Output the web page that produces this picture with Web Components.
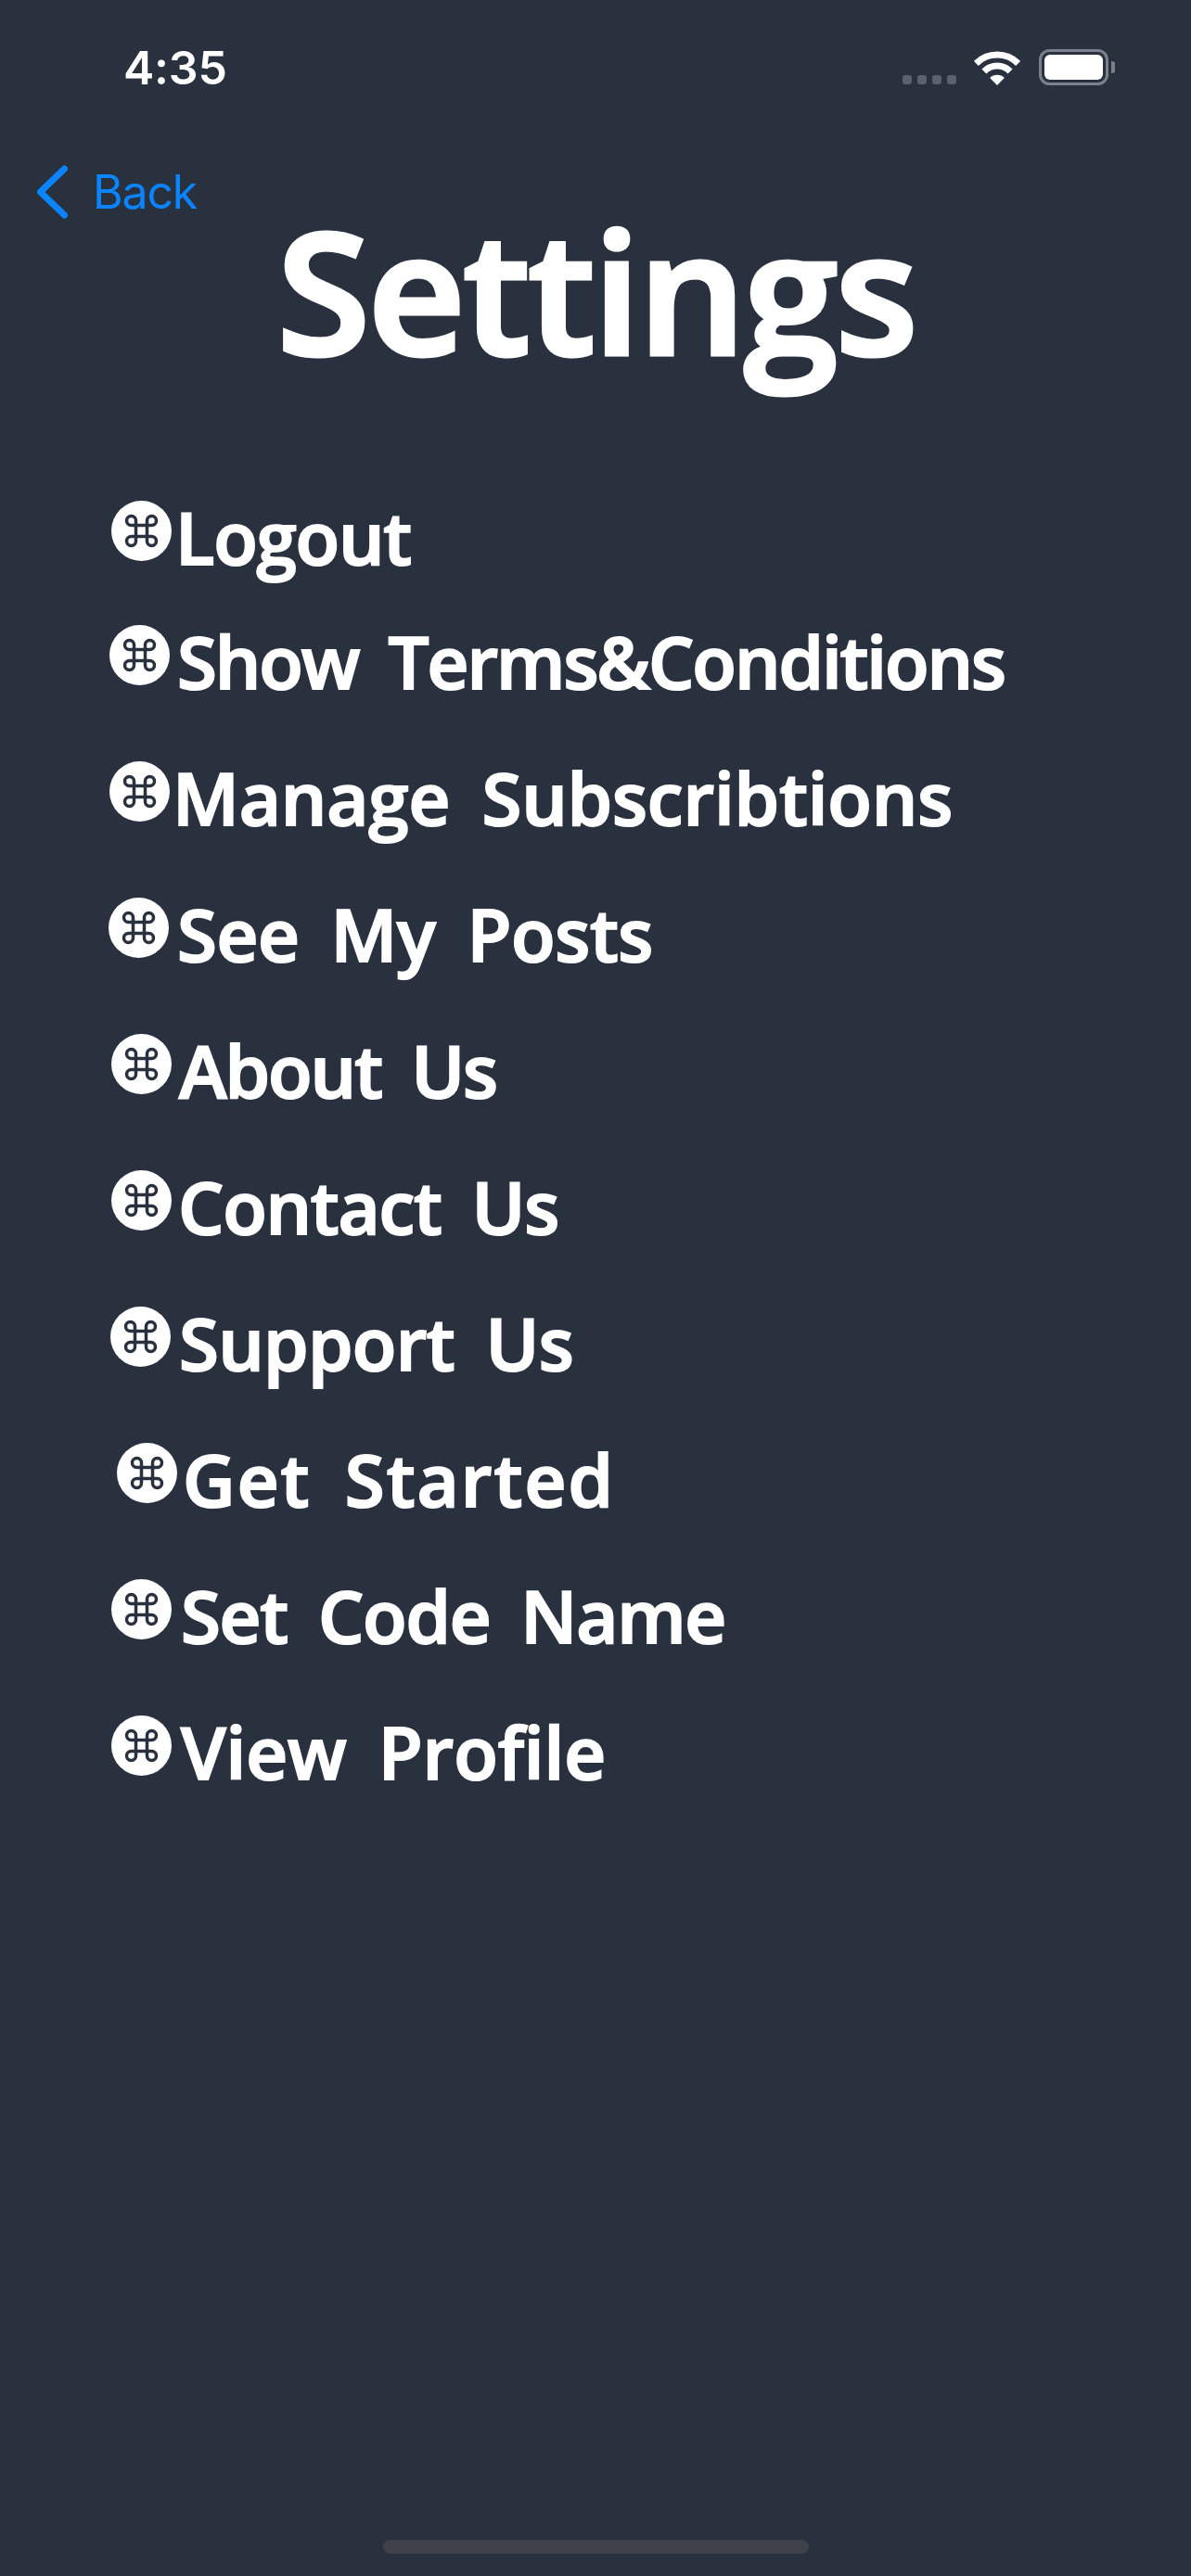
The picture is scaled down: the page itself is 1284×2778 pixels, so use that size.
<!DOCTYPE html>
<html>
<head>
<meta charset="utf-8">
<title>Settings</title>
<style>
  html, body { margin: 0; padding: 0; background: #29303e; }
</style>
</head>
<body>
<settings-screen>
  <status-bar slot="status" time="4:35"></status-bar>
  <back-link slot="nav">Back</back-link>
  <page-title slot="title">Settings</page-title>
  <settings-row label="Logout" x="120" gap="4" width="254" height="134"></settings-row>
  <settings-row label="Show Terms&amp;Conditions" x="118" gap="8" width="892" height="147"></settings-row>
  <settings-row label="Manage Subscribtions" x="118" gap="3" width="841" height="147"></settings-row>
  <settings-row label="See My Posts" x="117" gap="9" width="513" height="147"></settings-row>
  <settings-row label="About Us" x="120" gap="8" width="342" height="147"></settings-row>
  <settings-row label="Contact Us" x="120" gap="7" width="410" height="147"></settings-row>
  <settings-row label="Support Us" x="119" gap="9" width="425" height="147"></settings-row>
  <settings-row label="Get Started" x="126" gap="6" width="466" height="147"></settings-row>
  <settings-row label="Set Code Name" x="120" gap="10" width="587" height="147"></settings-row>
  <settings-row label="View Profile" x="120" gap="10" width="458" height="147"></settings-row>
</settings-screen>

<script>
class SettingsScreen extends HTMLElement {
  constructor() {
    super();
    this.attachShadow({ mode: 'open' })
    this.shadowRoot.innerHTML = `
      <style>
        :host {
          display: flex;
          flex-direction: column;
          width: 1284px;
          height: 2778px;
          overflow: hidden;
          background: #29303e;
          color: #fff;
        }
        main {
          display: flex;
          flex-direction: column;
          padding-top: 127px;
        }
        footer {
          margin-top: auto;
          display: flex;
          justify-content: center;
          padding-bottom: 24px;
        }
        footer div {
          width: 459px;
          height: 15px;
          border-radius: 8px;
          background: #3f4248;
        }
      </style>
      <slot name="status"></slot>
      <slot name="nav"></slot>
      <slot name="title"></slot>
      <main><slot></slot></main>
      <footer><div></div></footer>
    `
  }
}

class StatusBar extends HTMLElement {
  constructor() {
    super();
    this.attachShadow({ mode: 'open' })
    this.shadowRoot.innerHTML = `
      <style>
        :host {
          display: flex;
          align-items: flex-start;
          height: 178px;
          box-sizing: border-box;
          padding: 53px 82px 0 133px;
        }
        time {
          font: 600 50px/40px Inter, "Liberation Sans", sans-serif;
          letter-spacing: -0.2px;
          margin-right: auto;
        }
        .dots {
          display: flex;
          gap: 6px;
          margin: 28px 19px 0 0;
        }
        .dots i {
          width: 10px;
          height: 10px;
          border-radius: 3px;
          background: #5b606c;
        }
        .wifi {
          width: 50px;
          height: 38px;
          margin: 1px 20px 0 0;
        }
        .battery {
          width: 82px;
          height: 40px;
        }
      </style>
      <time></time>
      <div class="dots"><i></i><i></i><i></i><i></i></div>
      <svg class="wifi" viewBox="0 0 50 38">
        <path d="M2.4 14.4A32 32 0 0 1 47.6 14.4M10.9 22.9A20 20 0 0 1 39.1 22.9" fill="none" stroke="#fff" stroke-width="7"/>
        <path d="M25 38L17.2 30A11 11 0 0 1 32.8 30Z" fill="#fff"/>
      </svg>
      <svg class="battery" viewBox="0 0 82 40">
        <rect x="1.5" y="1.5" width="72" height="36" rx="10" fill="none" stroke="#7b808b" stroke-width="3"/>
        <rect x="6" y="6" width="63" height="27" rx="6" fill="#fff"/>
        <path d="M78 13A6 6 0 0 1 78 26Z" fill="#7b808b"/>
      </svg>
    `
  }

  connectedCallback() {
    this.shadowRoot.querySelector('time').innerText = this.getAttribute('time')
  }
}

class BackLink extends HTMLElement {
  constructor() {
    super();
    this.attachShadow({ mode: 'open' })
    this.shadowRoot.innerHTML = `
      <style>
        :host {
          display: flex;
          align-items: center;
          height: 58px;
          padding-left: 39px;
          color: #0a84ff;
          font: 400 50px/58px Inter, "Liberation Sans", sans-serif;
          letter-spacing: -1.2px;
        }
        svg {
          width: 36px;
          height: 58px;
          margin-right: 25px;
        }
      </style>
      <svg viewBox="0 0 36 58">
        <path d="M30.5 4L4.5 29L30.5 54" fill="none" stroke="currentColor" stroke-width="7" stroke-linecap="round" stroke-linejoin="round"/>
      </svg>
      <slot></slot>
    `
  }
}

class PageTitle extends HTMLElement {
  constructor() {
    super();
    this.attachShadow({ mode: 'open' })
    this.shadowRoot.innerHTML = `
      <style>
        :host {
          display: block;
          height: 190px;
          margin-top: -13px;
          text-align: center;
          font: 600 182px/176px "Open Sans", sans-serif;
          letter-spacing: -2px;
          -webkit-text-stroke: 5px #fff;
          padding-left: 2px;
        }
      </style>
      <slot></slot>
    `
  }
}

class SettingsRow extends HTMLElement {
  constructor() {
    super();
    this.attachShadow({ mode: 'open' })
    this.shadowRoot.innerHTML = `
      <style>
        :host {
          display: flex;
          align-items: flex-start;
          box-sizing: border-box;
        }
        svg {
          flex: none;
          width: 65px;
          height: 65px;
        }
        span {
          font: 600 78px/1 "Open Sans", sans-serif;
          white-space: nowrap;
          word-spacing: 14px;
          -webkit-text-stroke: 2px #fff;
        }
      </style>
      <svg viewBox="0 0 65 65">
        <circle cx="32.5" cy="32.5" r="32.5" fill="#fff"/>
        <path d="M26.5 21.5V43.5A5 5 0 1 1 21.5 38.5H43.5A5 5 0 1 1 38.5 43.5V21.5A5 5 0 1 1 43.5 26.5H21.5A5 5 0 1 1 26.5 21.5Z" fill="none" stroke="#29303e" stroke-width="3.5"/>
      </svg>
      <span></span>
    `
  }

  #fit(label) {
    // the reference font is not installed, so stretch the text to its measured width
    const width = parseFloat(this.getAttribute('width'))
    const spacing = (width - label.getBoundingClientRect().width) / label.innerText.length
    label.style.letterSpacing = `${spacing}px`
  }

  connectedCallback() {
    const label = this.shadowRoot.querySelector('span')
    label.innerText = this.getAttribute('label')
    label.style.marginLeft = `${this.getAttribute('gap')}px`
    this.style.height = `${this.getAttribute('height')}px`
    this.style.paddingLeft = `${this.getAttribute('x')}px`
    this.#fit(label)
  }
}

customElements.define('settings-screen', SettingsScreen)
customElements.define('status-bar', StatusBar)
customElements.define('back-link', BackLink)
customElements.define('page-title', PageTitle)
customElements.define('settings-row', SettingsRow)
</script>
</body>
</html>
